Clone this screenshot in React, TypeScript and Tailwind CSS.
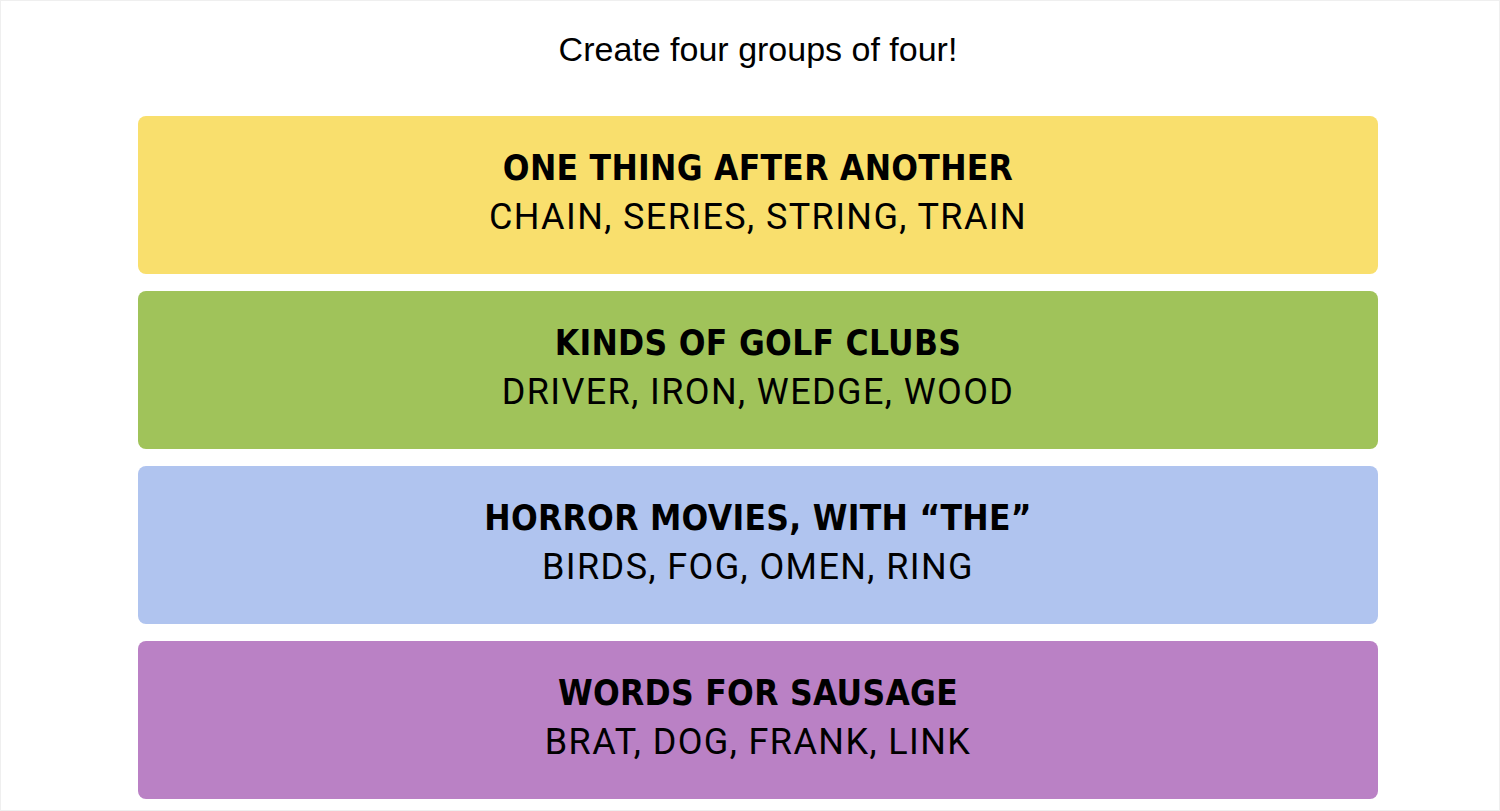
import React from "react";

type Group = { title: string; words: string; color: string };

const groups: Group[] = [
  { title: "ONE THING AFTER ANOTHER", words: "CHAIN, SERIES, STRING, TRAIN", color: "bg-[#f9df6d]" },
  { title: "KINDS OF GOLF CLUBS", words: "DRIVER, IRON, WEDGE, WOOD", color: "bg-[#a0c35a]" },
  { title: "HORROR MOVIES, WITH \u201CTHE\u201D", words: "BIRDS, FOG, OMEN, RING", color: "bg-[#b0c4ef]" },
  { title: "WORDS FOR SAUSAGE", words: "BRAT, DOG, FRANK, LINK", color: "bg-[#ba81c5]" },
];

export default function App() {
  return (
    <div className="h-[811px] w-[1500px] border border-[#efefef] bg-white text-black">
      <div className="flex flex-col items-center pt-[26px] pl-[16px]">
        <h1 className="font-['Liberation_Sans',Arial,sans-serif] text-[34px] leading-[44px] font-normal">
          Create four groups of four!
        </h1>
        <div className="mt-[45px] flex w-[1240px] flex-col gap-[17px]">
          {groups.map((g) => (
            <div
              key={g.title}
              className={`${g.color} flex h-[158px] flex-col items-center justify-center rounded-[8px] pb-[4px]`}
            >
              <div className="font-['DejaVu_Sans_Condensed','DejaVu_Sans',sans-serif] text-[35px] leading-[49px] font-bold tracking-[0.3px]">
                {g.title}
              </div>
              <div className="font-['Roboto','Liberation_Sans',sans-serif] text-[36px] leading-[49px] font-normal tracking-[1.4px]">
                {g.words}
              </div>
            </div>
          ))}
        </div>
      </div>
    </div>
  );
}
